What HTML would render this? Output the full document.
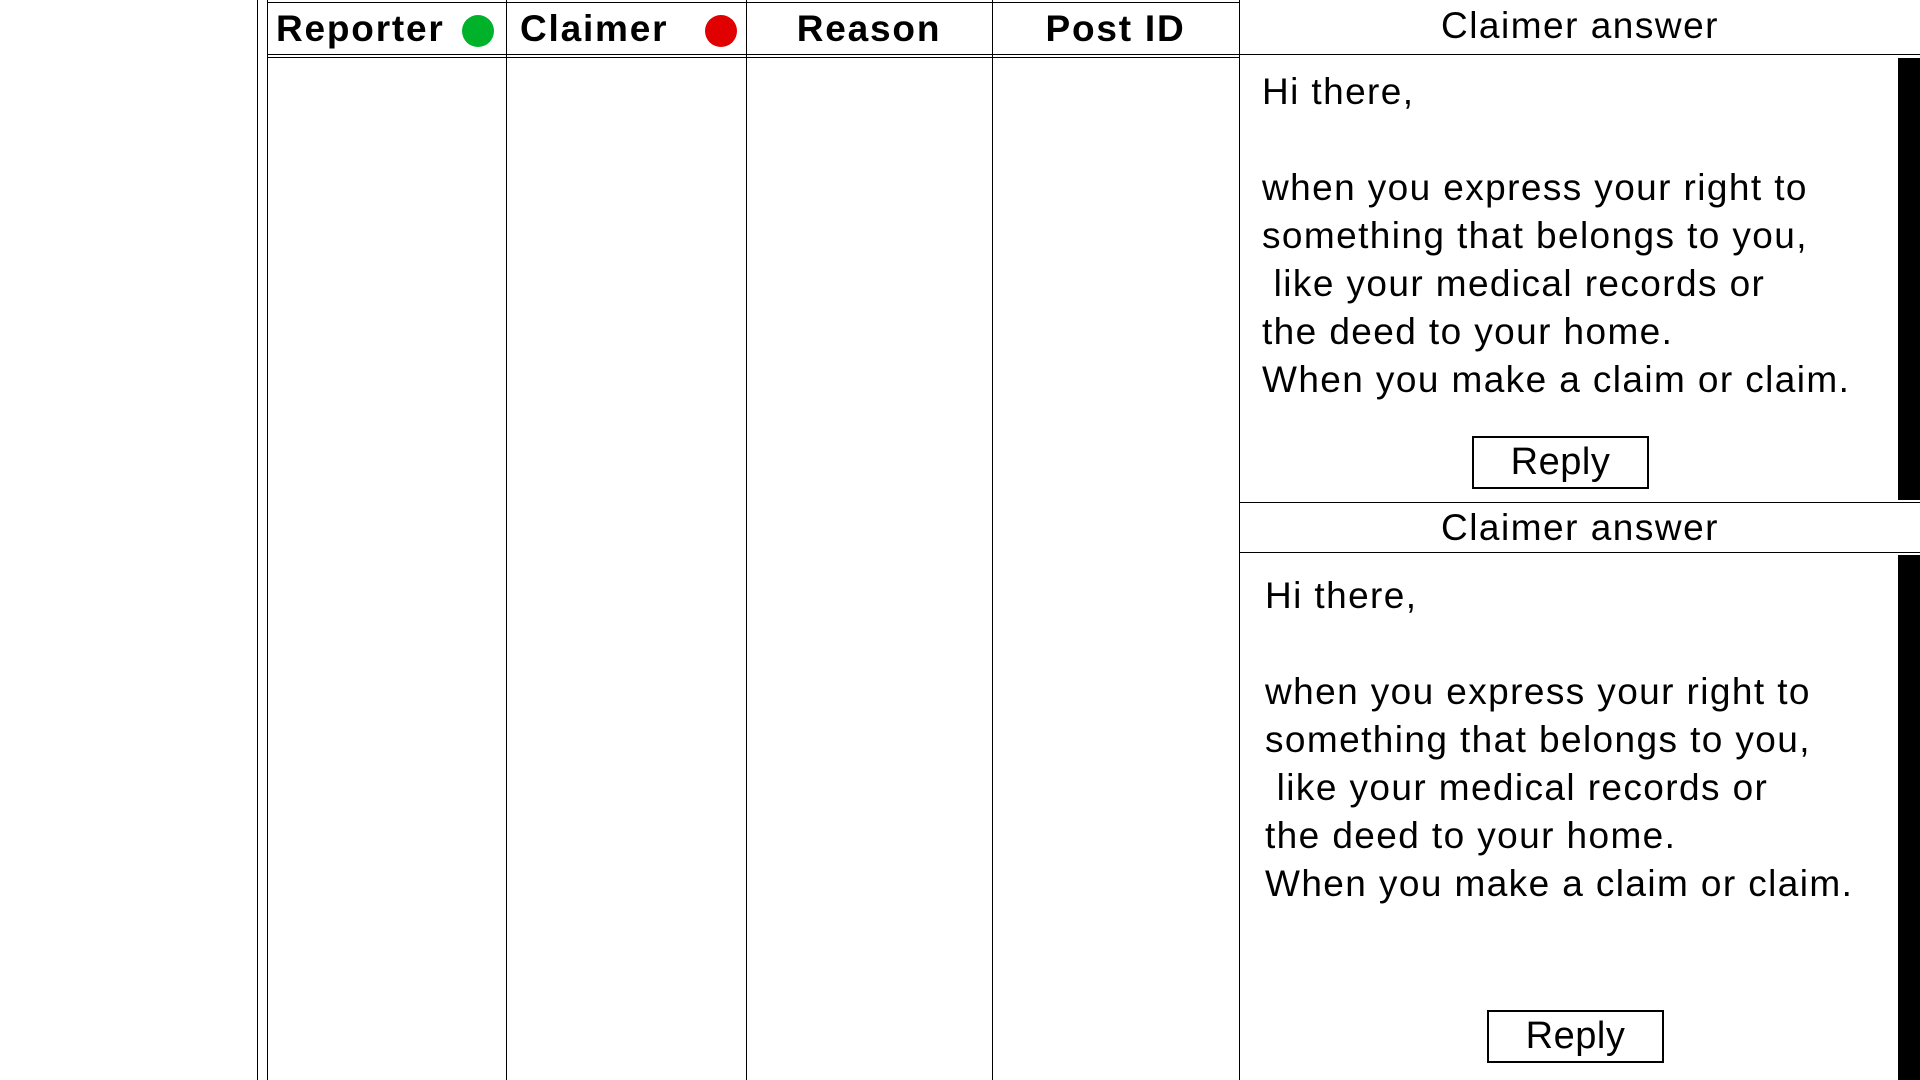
<!DOCTYPE html>
<html><head><meta charset="utf-8"><style>
*{margin:0;padding:0;box-sizing:border-box}
body{width:1920px;height:1080px;background:#fff;position:relative;overflow:hidden;font-family:"Liberation Sans",Arial,sans-serif;color:#000}
.v{position:absolute;top:0;width:1px;height:1080px;background:#000}
.h{position:absolute;height:1px;background:#000}
.th{position:absolute;top:2px;height:52px;line-height:54px;font-weight:bold;font-size:37px;text-align:center;letter-spacing:1.8px}
.dot{position:absolute;width:32px;height:32px;border-radius:50%;top:15px}
.ca{position:absolute;left:1240px;width:680px;text-align:center;font-size:37px;letter-spacing:1.5px}
.txt{position:absolute;font-size:37px;line-height:48px;white-space:pre;letter-spacing:1.4px}
.btn{position:absolute;border:2px solid #000;font-size:38px;text-align:center;letter-spacing:0.5px}
.bar{position:absolute;left:1898px;width:22px;background:#000}
</style></head><body>
<div class="v" style="left:257px"></div>
<div class="v" style="left:267px"></div>
<div class="v" style="left:506px"></div>
<div class="v" style="left:746px"></div>
<div class="v" style="left:992px"></div>
<div class="v" style="left:1239px"></div>
<div class="h" style="left:267px;width:972px;top:2px"></div>
<div class="h" style="left:267px;width:1653px;top:54px"></div>
<div class="h" style="left:267px;width:972px;top:57px"></div>
<div class="th" style="left:276px;text-align:left">Reporter</div>
<div class="dot" style="left:462px;background:#00b22a"></div>
<div class="th" style="left:520px;text-align:left">Claimer</div>
<div class="dot" style="left:705px;background:#e00000"></div>
<div class="th" style="left:746px;width:246px">Reason</div>
<div class="th" style="left:992px;width:247px">Post ID</div>

<div class="ca" style="top:2px;line-height:48px">Claimer answer</div>
<div class="bar" style="top:58px;height:442px"></div>
<div class="txt" style="left:1262px;top:68px">Hi there,

when you express your right to
something that belongs to you,
 like your medical records or
the deed to your home.
When you make a claim or claim.</div>
<div class="btn" style="left:1472px;top:436px;width:177px;height:53px;line-height:49px">Reply</div>

<div class="h" style="left:1239px;width:681px;top:502px"></div>
<div class="ca" style="top:504px;line-height:48px">Claimer answer</div>
<div class="h" style="left:1239px;width:681px;top:552px"></div>
<div class="bar" style="top:555px;height:525px"></div>
<div class="txt" style="left:1265px;top:572px">Hi there,

when you express your right to
something that belongs to you,
 like your medical records or
the deed to your home.
When you make a claim or claim.</div>
<div class="btn" style="left:1487px;top:1010px;width:177px;height:53px;line-height:49px">Reply</div>
</body></html>
